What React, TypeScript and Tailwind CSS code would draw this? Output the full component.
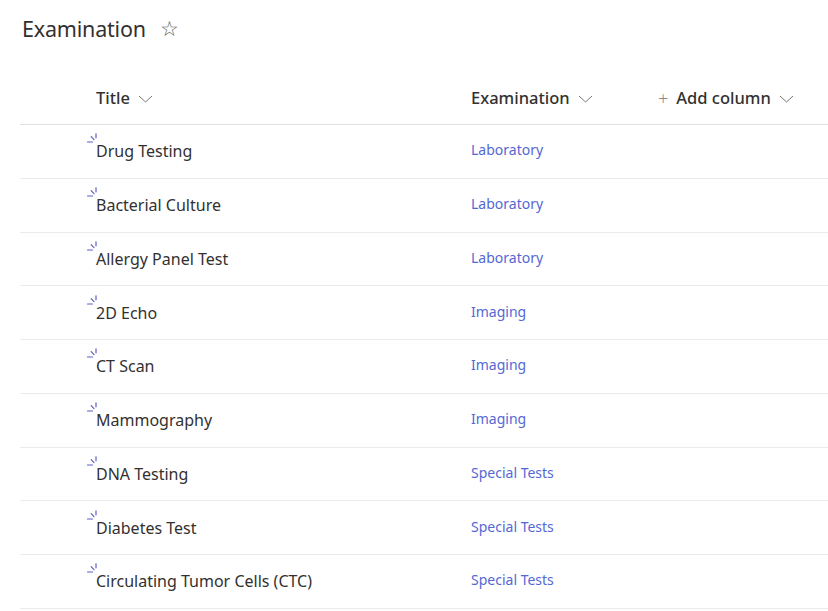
import React from "react";

const rows = [
  { title: "Drug Testing", exam: "Laboratory" },
  { title: "Bacterial Culture", exam: "Laboratory" },
  { title: "Allergy Panel Test", exam: "Laboratory" },
  { title: "2D Echo", exam: "Imaging" },
  { title: "CT Scan", exam: "Imaging" },
  { title: "Mammography", exam: "Imaging" },
  { title: "DNA Testing", exam: "Special Tests" },
  { title: "Diabetes Test", exam: "Special Tests" },
  { title: "Circulating Tumor Cells (CTC)", exam: "Special Tests" },
];

function Chevron() {
  return (
    <svg width="15" height="8" viewBox="0 0 15 8" className="ml-[8px] mt-[1px]">
      <path d="M1 1l6.5 6 6.5-6" fill="none" stroke="#797775" strokeWidth="1" />
    </svg>
  );
}

function NewGlimmer() {
  return (
    <svg width="12" height="10" viewBox="0 0 12 10" className="absolute left-[-10px] top-[-7px]">
      <g stroke="#5b5fc7" strokeWidth="1.2" strokeLinecap="round">
        <path d="M1.5 9h5" />
        <path d="M10 0.8v4" />
        <path d="M5.2 3.6l2.8 3" />
      </g>
    </svg>
  );
}

export default function App() {
  return (
    <div
      className="w-[828px] h-[611px] bg-white overflow-hidden text-[#323130]"
      style={{ fontFamily: "'Noto Sans', 'Open Sans', sans-serif" }}
    >
      {/* Page title */}
      <div className="flex items-center h-[57px] pl-[22px]">
        <h1 className="text-[21.5px] leading-none tracking-[-0.2px]">Examination</h1>
        <span className="ml-[14px] text-[21px] leading-none text-[#605e5c]">☆</span>
      </div>

      {/* List */}
      <div className="ml-[20px] mt-[15px]">
        <div className="flex items-center h-[53px] border-b border-[#e1dfdd]">
          <div className="w-[76px]" />
          <div className="w-[375px] flex items-center text-[16.5px] font-medium">
            Title
            <Chevron />
          </div>
          <div className="w-[187px] flex items-center text-[16.5px] font-medium">
            Examination
            <Chevron />
          </div>
          <div className="flex items-center text-[16.5px] font-medium">
            <span className="text-[#8a8886] text-[18px] font-light mr-[8px]">+</span>
            Add column
            <Chevron />
          </div>
        </div>

        {rows.map((r) => (
          <div key={r.title} className="flex items-center h-[53.75px] border-b border-[#edebe9]">
            <div className="w-[76px]" />
            <div className="w-[375px] text-[16px]">
              <span className="relative">
                <NewGlimmer />
                {r.title}
              </span>
            </div>
            <div className="w-[187px] text-[14px] text-[#5468d4] mb-[3px]">{r.exam}</div>
          </div>
        ))}
      </div>
    </div>
  );
}
